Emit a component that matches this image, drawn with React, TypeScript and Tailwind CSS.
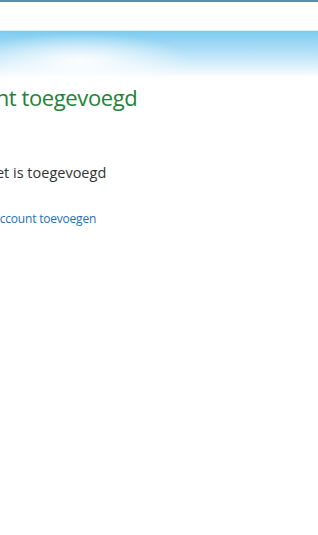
export default function App() {
  return (
    <div className="min-h-[535px] w-[318px] overflow-hidden bg-white font-['Open_Sans','Noto_Sans',sans-serif]">
      <div className="h-[2px] bg-[#5b8ea8]" />
      <div className="h-[28px] bg-[#fffffd]" />
      {/* sky banner */}
      <div className="h-[48px] border-t border-[#d9f0fa] bg-[radial-gradient(ellipse_110px_28px_at_80px_30px,rgba(255,255,255,0.95),rgba(255,255,255,0)),linear-gradient(to_bottom,#7ccbf0_0%,#b3e1f6_45%,#ffffff_100%)]" />

      <div className="flex flex-col">
        <h1 className="-ml-[64px] mt-[4px] whitespace-nowrap text-[22px] leading-[30px] tracking-[-0.4px] text-[#228236]">
          Account toegevoegd
        </h1>
        <p className="-ml-[64px] mt-[50px] whitespace-nowrap text-[14.5px] leading-[22px] text-[#333333]">
          Het pakket is toegevoegd
        </p>
        <a href="#" className="-ml-[55px] mt-[27px] whitespace-nowrap text-[12px] leading-[16px] tracking-[-0.2px] text-[#2470b3]">
          Nog een account toevoegen
        </a>
      </div>
    </div>
  );
}
